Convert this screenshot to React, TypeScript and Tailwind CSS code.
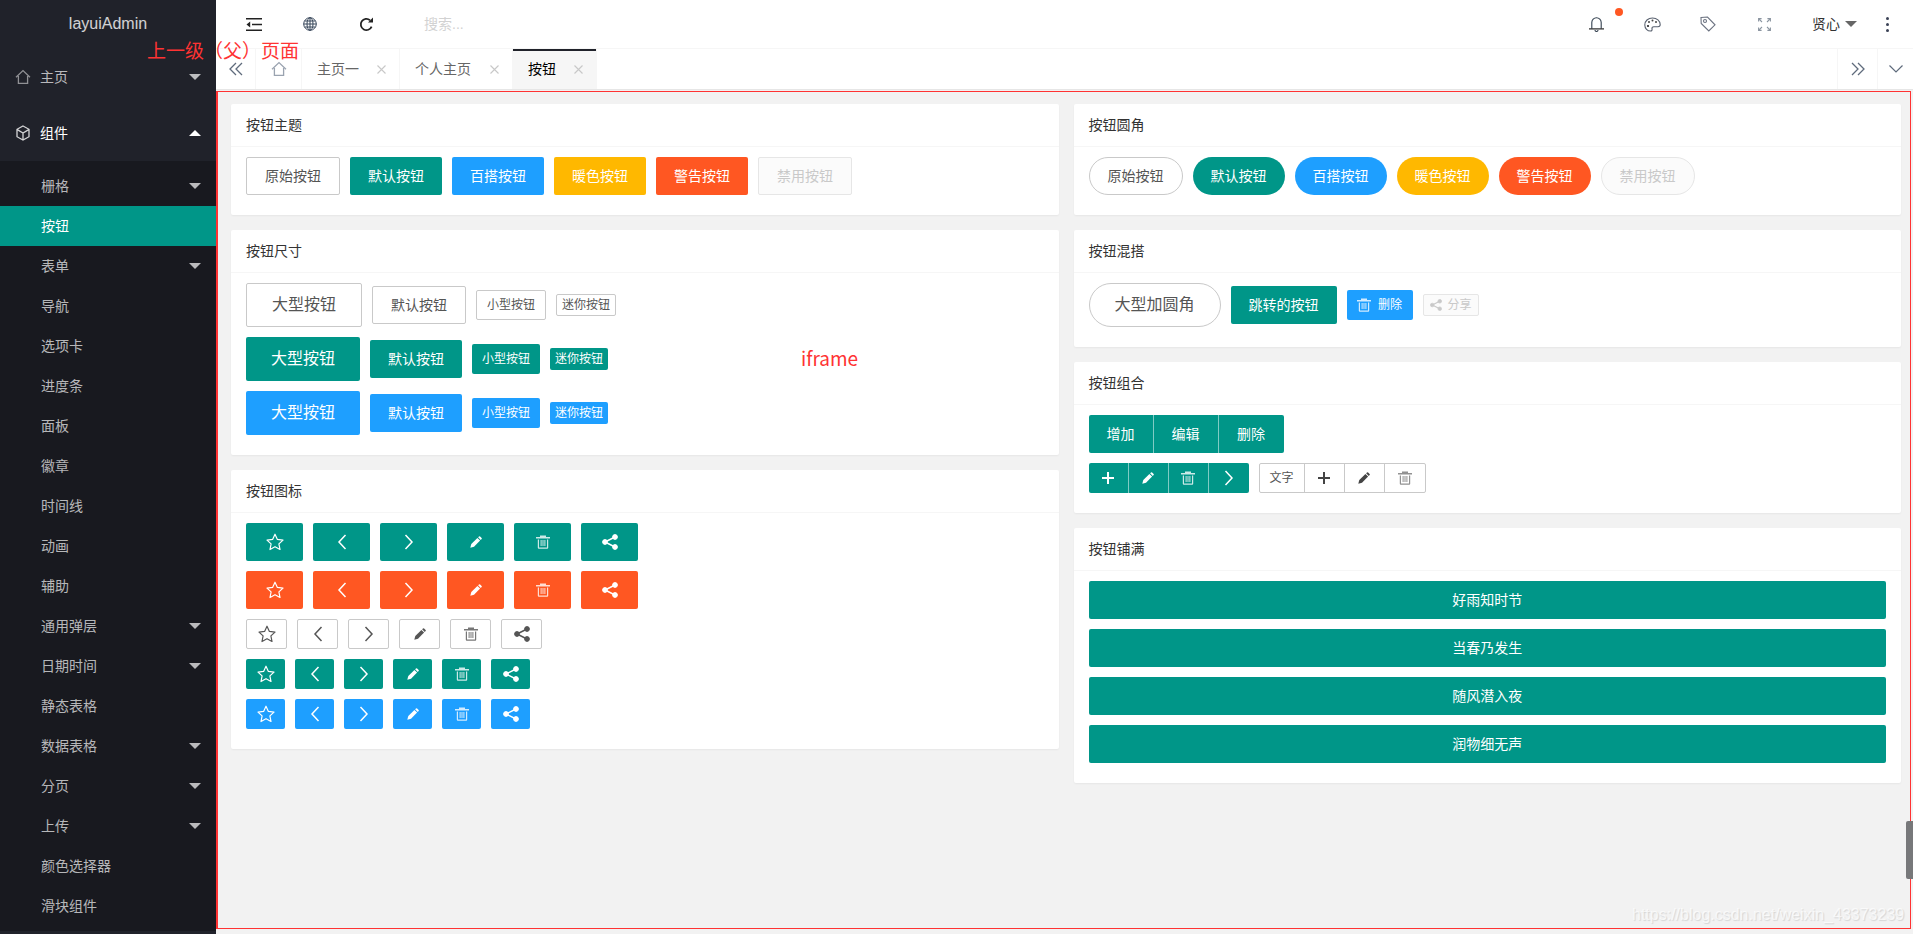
import { ReactNode } from "react";

const base = "inline-flex items-center justify-center shrink-0 rounded-[2px] whitespace-nowrap";

const theme: Record<string, string> = {
  plain: "border border-[#c9c9c9] bg-white text-[#555]",
  green: "bg-[#009688] text-white",
  blue: "bg-[#1e9fff] text-white",
  warm: "bg-[#ffb800] text-white",
  red: "bg-[#ff5722] text-white",
  off: "border border-[#e6e6e6] bg-[#fbfbfb] text-[#c9c9c9]",
};

const size: Record<string, string> = {
  lg: "h-[44px] px-[25px] text-[16px]",
  md: "h-[38px] px-[18px] text-[14px]",
  sm: "h-[30px] px-[10px] text-[12px]",
  xs: "h-[22px] px-[5px] text-[12px]",
};

function Btn({ kind = "plain", s = "md", pill, children }: { kind?: string; s?: string; pill?: boolean; children: ReactNode }) {
  return <span className={`${base} ${theme[kind]} ${size[s]} ${pill ? "rounded-[100px]" : ""}`}>{children}</span>;
}

function Row({ children }: { children: ReactNode }) {
  return <div className="flex items-center gap-[10px] mb-[10px]">{children}</div>;
}

function Card({ title, children }: { title: string; children: ReactNode }) {
  return (
    <div className="bg-white rounded-[2px] shadow-[0_1px_2px_0_rgba(0,0,0,0.05)] mb-[15px]">
      <div className="h-[43px] leading-[42px] px-[15px] text-[14px] text-[#333] border-b border-[#f6f6f6]">{title}</div>
      <div className="px-[15px] py-[10px]">{children}</div>
    </div>
  );
}

const Star = () => (
  <svg width="18" height="18" viewBox="0 0 18 18" fill="none" stroke="currentColor" strokeWidth="1.2" strokeLinejoin="round">
    <path d="M9 1.2 11.4 6.4 17 7.1 12.9 10.9 14 16.5 9 13.7 4 16.5 5.1 10.9 1 7.1 6.6 6.4Z" />
  </svg>
);
const Left = ({ h = 16 }: { h?: number }) => (
  <svg width="10" height={h} viewBox="0 0 10 16" fill="none" stroke="currentColor" strokeWidth="1.5">
    <path d="M8.5 1 2 8l6.5 7" />
  </svg>
);
const Right = ({ h = 16 }: { h?: number }) => (
  <svg width="10" height={h} viewBox="0 0 10 16" fill="none" stroke="currentColor" strokeWidth="1.5">
    <path d="M1.5 1 8 8l-6.5 7" />
  </svg>
);
const Pencil = () => (
  <svg width="12" height="12" viewBox="0 0 12 12" fill="currentColor">
    <path d="M0.3 11.7 1.3 8 7.4 1.9 10.1 4.6 4 10.7Z" />
    <path d="M8.1 1.2 9 0.4a.8.8 0 0 1 1.1 0L11.6 1.9a.8.8 0 0 1 0 1.1L10.8 3.9Z" />
  </svg>
);
const Trash = () => (
  <svg width="14" height="14" viewBox="0 0 14 14" fill="currentColor" opacity="0.8">
    <path d="M4 0.5h6v1.5h4v1.6H0V2h4Z" />
    <path d="M1.8 4.5h1.2v8h8v-8h1.2v8.2a1 1 0 0 1-1 1H2.8a1 1 0 0 1-1-1Z" />
    <path d="M4.6 5h1v6h-1ZM6.5 5h1v6h-1ZM8.4 5h1v6h-1Z" />
  </svg>
);
const Share = () => (
  <svg width="16" height="16" viewBox="0 0 16 16" fill="currentColor" stroke="currentColor">
    <circle cx="3" cy="8" r="2.4" />
    <circle cx="13" cy="3" r="2.4" />
    <circle cx="13" cy="13" r="2.4" />
    <path d="M3 8 13 3M3 8l10 5" strokeWidth="1.5" />
  </svg>
);
const Plus = () => (
  <svg width="12" height="12" viewBox="0 0 12 12" stroke="currentColor" strokeWidth="2">
    <path d="M0 6h12M6 0v12" />
  </svg>
);
const House = ({ className }: { className: string }) => (
  <svg width="16" height="16" viewBox="0 0 16 16" fill="none" stroke="currentColor" strokeWidth="1.3" className={className}>
    <path d="M1 8.2 8 1.6l7 6.6" />
    <path d="M3.4 7v7.4h9.2V7" />
  </svg>
);
const Cube = () => (
  <svg width="16" height="16" viewBox="0 0 16 16" fill="none" stroke="currentColor" strokeWidth="1.3">
    <path d="M8 1 14 4.3v7.4L8 15l-6-3.3V4.3Z" />
    <path d="M2.3 4.6 8 8l5.7-3.4M8 8v6.6" />
  </svg>
);
const Double = ({ flip }: { flip?: boolean }) => (
  <svg width="14" height="14" viewBox="0 0 14 14" fill="none" stroke="#5f6b7c" strokeWidth="1.3" className={flip ? "rotate-180" : ""}>
    <path d="M7 1 1 7l6 6M13 1 7 7l6 6" />
  </svg>
);
const Close = () => (
  <svg width="9" height="9" viewBox="0 0 9 9" stroke="#c8c8c8" strokeWidth="1.1">
    <path d="M.5.5l8 8M8.5.5l-8 8" />
  </svg>
);
const Fold = () => (
  <svg width="16" height="13" viewBox="0 0 16 13" fill="#222">
    <path d="M0 0h16v1.6H0ZM6 5.7h10v1.6H6ZM0 11.4h16V13H0ZM4.2 3.5v6L.5 6.5Z" />
  </svg>
);
const Globe = () => (
  <svg width="14" height="14" viewBox="0 0 14 14" fill="none" stroke="#37465a" strokeWidth="1">
    <circle cx="7" cy="7" r="6.3" />
    <ellipse cx="7" cy="7" rx="3" ry="6.3" />
    <path d="M7 .7v12.6M.7 7h12.6M1.6 4h10.8M1.6 10h10.8" />
  </svg>
);
const Reload = () => (
  <svg width="15" height="15" viewBox="0 0 15 15" fill="none" stroke="#222" strokeWidth="1.8">
    <path d="M12.6 9.6A5.6 5.6 0 1 1 11 3.2" />
    <path d="M14 .6v5h-5Z" fill="#222" stroke="none" />
  </svg>
);
const Bell = () => (
  <svg width="15" height="16" viewBox="0 0 15 16" fill="none" stroke="#33404f" strokeWidth="1.1">
    <path d="M2.8 12.5V6.5a4.7 4.7 0 0 1 9.4 0v6" />
    <path d="M0 12.9h15" stroke="#111" />
    <path d="M6 14a1.5 1.5 0 0 0 3 0" />
  </svg>
);
const Palette = () => (
  <svg width="17" height="15" viewBox="0 0 17 15" fill="none" stroke="#5a6270" strokeWidth="1.1">
    <path d="M8.5 1C4 1 .8 4 .8 8c0 3.4 2.600 6 5.700 6 1.400 0 1.800-.9 1.500-2-.3-1.300.4-2.200 1.800-2.200h4.200c1.300 0 2.200-.8 2.200-2.200C16.200 3.600 12.800 1 8.500 1Z" />
    <circle cx="4" cy="9" r="1.100" fill="#222" stroke="none" />
    <circle cx="5" cy="5" r="1" fill="#444" stroke="none" />
    <circle cx="8.500" cy="3.600" r="1" fill="#444" stroke="none" />
    <circle cx="12" cy="5" r="1" fill="#444" stroke="none" />
  </svg>
);
const Tag = () => (
  <svg width="16" height="16" viewBox="0 0 16 16" fill="none" stroke="#6b7280" strokeWidth="1.1">
    <path d="M1 1.500 7.500 1 15 8.800 8.800 15 1.200 7.500Z" />
    <circle cx="5" cy="5" r="1.500" />
  </svg>
);
const Expand = () => (
  <svg width="13" height="13" viewBox="0 0 13 13" fill="none" stroke="#8b95a1" strokeWidth="1.1">
    <path d="M.6 3.600v-3h3M.6.600l3.400 3.400M12.400 3.600v-3h-3M12.400.600 9 4M.6 9.400v3h3M.6 12.400 4 9M12.400 9.400v3h-3M12.400 12.400 9 9" />
  </svg>
);

const Down = ({ c }: { c: string }) => <span className={`w-0 h-0 border-x-[6px] border-x-transparent border-t-[6px] ${c}`} />;

const subs: [string, boolean?][] = [
  ["栅格", true],
  ["按钮"],
  ["表单", true],
  ["导航"],
  ["选项卡"],
  ["进度条"],
  ["面板"],
  ["徽章"],
  ["时间线"],
  ["动画"],
  ["辅助"],
  ["通用弹层", true],
  ["日期时间", true],
  ["静态表格"],
  ["数据表格", true],
  ["分页", true],
  ["上传", true],
  ["颜色选择器"],
  ["滑块组件"],
];

function Sidebar() {
  return (
    <aside className="w-[216px] shrink-0 h-full overflow-hidden bg-[#20222a]">
      <div className="h-[49px] text-center text-[16px] leading-[48px] text-white/80">layuiAdmin</div>
      <div className="h-[56px] flex items-center pl-[15px] pr-[15px] text-white/70 text-[14px]">
        <House className="mr-[9px] text-white/50" />
        <span className="flex-1">主页</span>
        <Down c="border-t-white/70" />
      </div>
      <div className="h-[56px] flex items-center pl-[15px] pr-[15px] text-white text-[14px]">
        <span className="mr-[9px] text-white/80">
          <Cube />
        </span>
        <span className="flex-1">组件</span>
        <span className="w-0 h-0 border-x-[6px] border-x-transparent border-b-[6px] border-b-white" />
      </div>
      <div className="bg-[#18191f] py-[5px]">
        {subs.map(([name, arrow]) => (
          <div
            key={name}
            className={`h-[40px] flex items-center pl-[41px] pr-[15px] text-[14px] ${name === "按钮" ? "bg-[#009688] text-white" : "text-white/70"}`}
          >
            <span className="flex-1">{name}</span>
            {arrow && <Down c="border-t-white/70" />}
          </div>
        ))}
      </div>
    </aside>
  );
}

function Header() {
  return (
    <div className="h-[49px] shrink-0 flex items-center bg-white border-b border-[#f6f6f6] pl-[10px] pr-[5px]">
      <span className="w-[56px] flex justify-center"><Fold /></span>
      <span className="w-[56px] flex justify-center"><Globe /></span>
      <span className="w-[56px] flex justify-center"><Reload /></span>
      <span className="ml-[30px] text-[14px] text-[#d2d2d2]">搜索...</span>
      <div className="flex-1" />
      <span className="w-[56px] flex justify-center relative">
        <Bell />
        <span className="absolute left-[47px] top-[-8px] w-[8px] h-[8px] rounded-full bg-[#ff5722]" />
      </span>
      <span className="w-[56px] flex justify-center"><Palette /></span>
      <span className="w-[56px] flex justify-center"><Tag /></span>
      <span className="w-[56px] flex justify-center"><Expand /></span>
      <span className="w-[76px] flex items-center pl-[20px] gap-[5px] text-[14px] text-[#333]">
        贤心
        <Down c="border-t-[#666]" />
      </span>
      <span className="w-[40px] flex flex-col items-center gap-[3px] pr-[1px]">
        <i className="w-[3px] h-[3px] rounded-full bg-[#3b4256]" />
        <i className="w-[3px] h-[3px] rounded-full bg-[#3b4256]" />
        <i className="w-[3px] h-[3px] rounded-full bg-[#3b4256]" />
      </span>
    </div>
  );
}

function Tab({ label, w, active }: { label: string; w: string; active?: boolean }) {
  return (
    <div className={`relative h-full flex items-center pl-[15px] border-r border-[#f6f6f6] text-[14px] ${w} ${active ? "bg-[#f6f6f6] text-black" : "text-[#666]"}`}>
      {active && <span className="absolute left-0 top-0 w-full h-[2px] bg-[#20222a]" />}
      <span className="flex-1">{label}</span>
      <span className="mr-[13px] flex"><Close /></span>
    </div>
  );
}

function Tabs() {
  return (
    <div className="h-[41px] shrink-0 flex bg-white border-b border-[#e6e6e6]">
      <div className="w-[40px] flex items-center justify-center border-r border-[#f6f6f6]"><Double /></div>
      <div className="w-[46px] flex items-center justify-center border-r border-[#f6f6f6] text-[#9aa3b0]"><House className="" /></div>
      <Tab label="主页一" w="w-[98px]" />
      <Tab label="个人主页" w="w-[113px]" />
      <Tab label="按钮" w="w-[84px]" active />
      <div className="flex-1" />
      <div className="w-[40px] flex items-center justify-center border-l border-[#f6f6f6]"><Double flip /></div>
      <div className="w-[36px] flex items-center justify-center border-l border-[#f6f6f6]">
        <svg width="14" height="8" viewBox="0 0 14 8" fill="none" stroke="#5f6b7c" strokeWidth="1.2"><path d="M.5.500 7 7l6.500-6.500" /></svg>
      </div>
    </div>
  );
}

const labels = ["原始按钮", "默认按钮", "百搭按钮", "暖色按钮", "警告按钮", "禁用按钮"];
const kinds = ["plain", "green", "blue", "warm", "red", "off"];

function IconRow({ kind, s, pad }: { kind: string; s: string; pad: string }) {
  return (
    <Row>
      {[<Star />, <Left />, <Right />, <Pencil />, <Trash />, <Share />].map((icon, i) => (
        <span key={i} className={`${base} ${theme[kind]} ${s} ${pad}`}>{icon}</span>
      ))}
    </Row>
  );
}

function LeftColumn() {
  return (
    <div>
      <Card title="按钮主题">
        <Row>
          {labels.map((t, i) => (
            <Btn key={t} kind={kinds[i]}>{t}</Btn>
          ))}
        </Row>
      </Card>
      <Card title="按钮尺寸">
        {["plain", "green", "blue"].map((k) => (
          <Row key={k}>
            <Btn kind={k} s="lg">大型按钮</Btn>
            <Btn kind={k}>默认按钮</Btn>
            <Btn kind={k} s="sm">小型按钮</Btn>
            <Btn kind={k} s="xs">迷你按钮</Btn>
          </Row>
        ))}
      </Card>
      <Card title="按钮图标">
        <IconRow kind="green" s="h-[38px]" pad="w-[57px]" />
        <IconRow kind="red" s="h-[38px]" pad="w-[57px]" />
        <IconRow kind="plain" s="h-[30px]" pad="w-[41px]" />
        <IconRow kind="green" s="h-[30px]" pad="w-[39px]" />
        <IconRow kind="blue" s="h-[30px]" pad="w-[39px]" />
      </Card>
    </div>
  );
}

function RightColumn() {
  return (
    <div>
      <Card title="按钮圆角">
        <Row>
          {labels.map((t, i) => (
            <Btn key={t} kind={kinds[i]} pill>{t}</Btn>
          ))}
        </Row>
      </Card>
      <Card title="按钮混搭">
        <Row>
          <Btn s="lg" pill>大型加圆角</Btn>
          <Btn kind="green">跳转的按钮</Btn>
          <span className={`${base} ${theme.blue} h-[30px] w-[66px] gap-[7px] text-[12px]`}><Trash />删除</span>
          <span className={`${base} ${theme.off} h-[22px] w-[56px] gap-[6px] text-[12px]`}>
            <span className="flex scale-[0.75] -mx-[2px]"><Share /></span>分享
          </span>
        </Row>
      </Card>
      <Card title="按钮组合">
        <Row>
          <div className="flex rounded-[2px] overflow-hidden bg-[#009688] text-white text-[14px] divide-x divide-white/50">
            {["增加", "编辑", "删除"].map((t) => (
              <span key={t} className="h-[38px] w-[65px] flex items-center justify-center">{t}</span>
            ))}
          </div>
        </Row>
        <Row>
          <div className="flex rounded-[2px] overflow-hidden bg-[#009688] text-white divide-x divide-white/50">
            {[<Plus />, <Pencil />, <Trash />, <Right />].map((icon, i) => (
              <span key={i} className="h-[30px] w-[40px] flex items-center justify-center">{icon}</span>
            ))}
          </div>
          <div className="flex rounded-[2px] overflow-hidden border border-[#c9c9c9] bg-white text-[#555] text-[12px] divide-x divide-[#c9c9c9]">
            <span className="h-[28px] w-[45px] flex items-center justify-center">文字</span>
            <span className="h-[28px] w-[40px] flex items-center justify-center text-[#444]"><Plus /></span>
            <span className="h-[28px] w-[40px] flex items-center justify-center text-[#444]"><Pencil /></span>
            <span className="h-[28px] w-[40px] flex items-center justify-center text-[#777]"><Trash /></span>
          </div>
        </Row>
      </Card>
      <Card title="按钮铺满">
        {["好雨知时节", "当春乃发生", "随风潜入夜", "润物细无声"].map((t) => (
          <div key={t} className="h-[38px] mb-[10px] rounded-[2px] bg-[#009688] text-white text-[14px] flex items-center justify-center">{t}</div>
        ))}
      </Card>
    </div>
  );
}

export default function App() {
  return (
    <div className="relative w-[1913px] h-[934px] overflow-hidden flex bg-[#f2f2f2] font-['Liberation_Sans','Noto_Sans_CJK_SC',sans-serif]">
      <Sidebar />
      <main className="flex-1 min-w-0 flex flex-col">
        <Header />
        <Tabs />
        <div className="flex-1 grid grid-cols-2 gap-x-[15px] items-start pl-[15px] pr-[12px] pt-[14px]">
          <LeftColumn />
          <RightColumn />
        </div>
      </main>

      {/* annotations drawn over the screenshot */}
      <div className="absolute left-[216px] top-[91px] w-[1695px] h-[838px] border border-l-2 border-[#ff3333] pointer-events-none" />
      <span className="absolute left-[147px] top-[38px] text-[19px] leading-[28px] text-[#ff3333]">上一级（父）页面</span>
      <span className="absolute left-[801px] top-[344px] text-[19px] leading-[28px] text-[#ff3333] font-['Noto_Sans_CJK_SC',sans-serif]">iframe</span>
      <span className="absolute left-[1906px] top-[821px] w-[7px] h-[58px] rounded-l-[2px] bg-[#77787a]" />
      <span className="absolute left-[1632px] top-[905px] text-[16px] leading-[20px] text-white/70 [text-shadow:1px_1px_1px_rgba(0,0,0,0.12)]">https://blog.csdn.net/weixin_43373239</span>
    </div>
  );
}
